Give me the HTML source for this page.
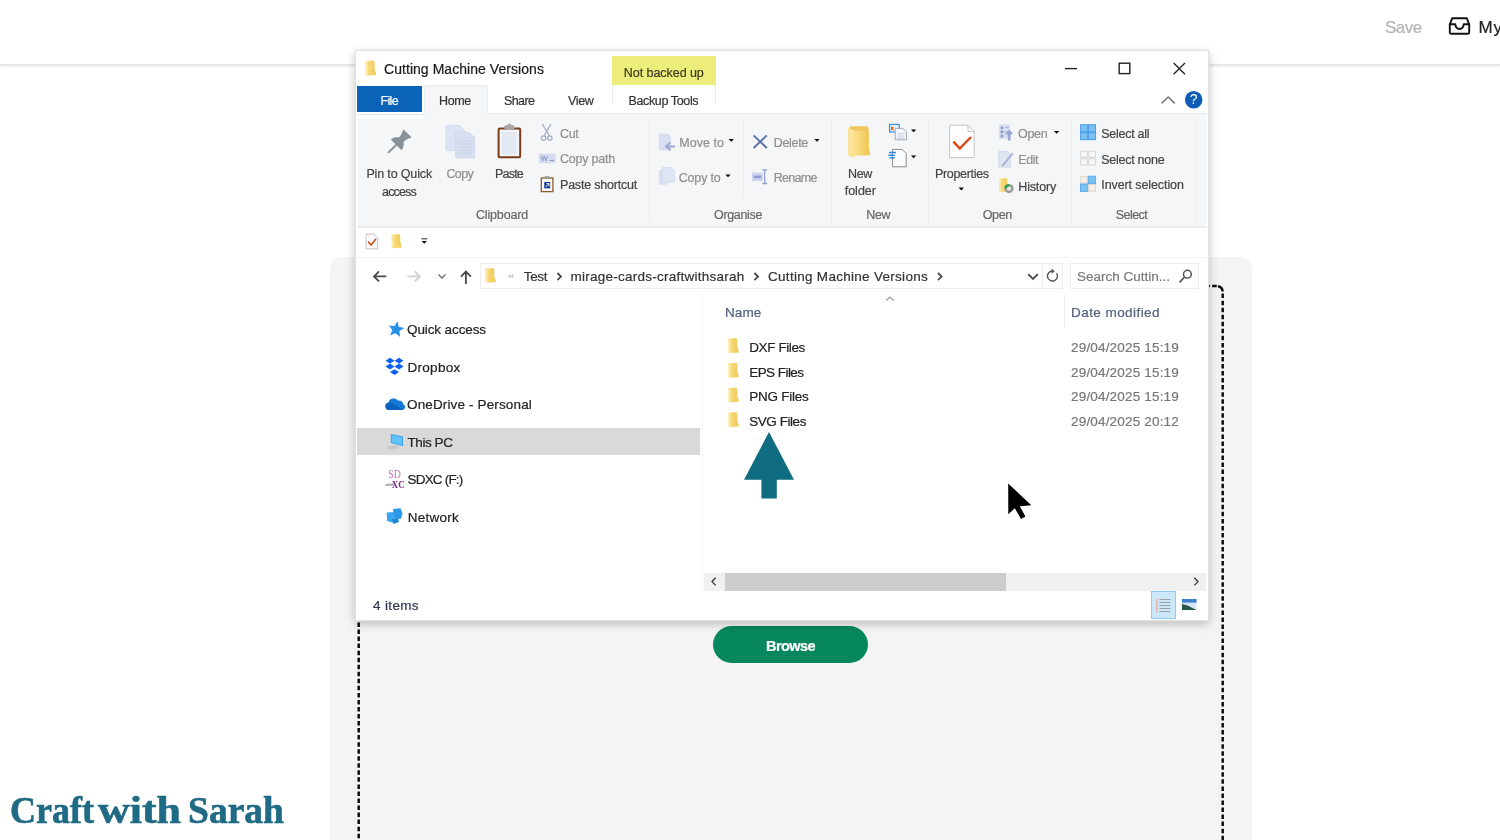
<!DOCTYPE html>
<html lang="en">
<head>
<meta charset="utf-8">
<title>Upload - Cutting Machine Versions</title>
<style>
html,body{margin:0;padding:0;}
body{width:1500px;height:840px;overflow:hidden;background:#fff;position:relative;font-family:"Liberation Sans",sans-serif;}
.t{position:absolute;white-space:pre;-webkit-text-stroke:.2px currentColor;}
.tl{position:absolute;left:0;top:0;will-change:transform;pointer-events:none;}
.abs{position:absolute;}
#hdr{position:absolute;left:0;top:0;width:1500px;height:64px;background:#fff;border-bottom:2px solid #e7e7e7;box-shadow:0 1px 2px rgba(0,0,0,.05);}
#panel{position:absolute;left:330px;top:257px;width:921.5px;height:600px;background:#f4f4f4;border-radius:12px 12px 0 0;}
#browse{position:absolute;left:713px;top:626px;width:155px;height:37.4px;border-radius:19px;background:#07875d;}
#logo{font-family:"Liberation Serif",serif;font-weight:bold;color:#1f6a84;-webkit-text-stroke:.5px #1f6a84;}
#win{position:absolute;left:356px;top:51px;width:852px;height:568.5px;background:#fff;box-shadow:0 0 0 1.2px #e2e2e2,0 3px 9px 1px rgba(0,0,0,.24);overflow:hidden;}
#win .abs{position:absolute;}
</style>
</head>
<body>
<!-- page behind the window -->
<div id="hdr"></div>
<svg class="abs" style="left:1440px;top:10px" width="40" height="34" viewBox="1440 10 40 34" fill="none" stroke="#111" stroke-width="1.9" stroke-linejoin="round" stroke-linecap="round">
  <path d="M1452.2 18.2h14.6l2.4 6.3v8a1.2 1.2 0 0 1-1.2 1.2h-17a1.2 1.2 0 0 1-1.2-1.2v-8z"/>
  <path d="M1449.800 24.200h5.400c.5 3.400 2.200 4.800 4.300 4.800s3.800-1.400 4.300-4.800h5.400"/>
</svg>
<div id="panel"></div>
<svg class="abs" style="left:330px;top:257px" width="922" height="583" viewBox="330 257 922 583" fill="none" stroke="#0d0d0d" stroke-width="2.5">
  <path d="M358.700 291.600V850M1222.700 293.600V850" stroke-dasharray="4.500 2.540"/>
  <path d="M364.500 286.100H1210M1212.100 286.100H1216.800M1218 286.300Q1222.300 287 1222.650 291.500M363.400 286.300Q359.100 287 358.750 291.500"/>
</svg>
<div id="browse"></div>
<div class="tl" style="width:1500px;height:840px">
<span class="t" style="left:1385.0px;top:15.8px;font-size:17px;line-height:24px;letter-spacing:-0.54px;color:#b3b3b3;">Save</span>
<span class="t" style="left:1478.6px;top:15.8px;font-size:17px;line-height:24px;letter-spacing:0.86px;color:#222;">My</span>
<span class="t" style="left:766.0px;top:635.9px;font-size:14.5px;line-height:20px;letter-spacing:-0.57px;color:#fff;font-weight:bold;">Browse</span>
</div>
<div id="logo"><span class="t" style="left:10px;top:788.5px;font-size:37px;line-height:44px;transform:scaleX(0.973);transform-origin:0 0;-webkit-text-stroke:.6px #1f6a84;">Craft</span><span class="t" style="left:98px;top:788.5px;font-size:37px;line-height:44px;transform:scaleX(1.187);transform-origin:0 0;-webkit-text-stroke:.6px #1f6a84;">with</span><span class="t" style="left:188px;top:788.5px;font-size:37px;line-height:44px;transform:scaleX(1.015);transform-origin:0 0;-webkit-text-stroke:.6px #1f6a84;">Sarah</span></div>

<!-- explorer window -->
<div id="win">
  <!-- structure -->
  <div class="abs" style="left:255.800px;top:5.200px;width:104px;height:28.400px;background:#eded7b;"></div>
  <div class="abs" style="left:255.800px;top:33.600px;width:104px;height:19px;border-left:1px solid #ececf3;border-right:1px solid #ececf3;box-sizing:border-box;"></div>
  <div class="abs" style="left:2px;top:62px;width:848.5px;height:112px;background:#f5f6f7;border-top:1px solid #e6e7e8;border-bottom:2px solid #ececec;box-sizing:content-box;"></div>
  <div class="abs" style="left:1px;top:61px;width:66px;height:6.5px;background:#fff;"></div>
  <div class="abs" style="left:1px;top:62.5px;width:66px;height:1.2px;background:#d3e6f8;"></div>
  <div class="abs" style="left:1px;top:34.8px;width:65px;height:26.3px;background:#0b63b9;"></div>
  <div class="abs" style="left:67.5px;top:34.3px;width:64.2px;height:29px;background:#f5f6f7;border:1px solid #ebecec;border-bottom:none;box-sizing:border-box;"></div>
  <!-- ribbon separators -->
  <div class="abs" style="left:293px;top:66px;width:1px;height:106px;background:#ecedee;"></div>
  <div class="abs" style="left:386.5px;top:70px;width:1px;height:76px;background:#ecedee;"></div>
  <div class="abs" style="left:475.3px;top:66px;width:1px;height:106px;background:#ecedee;"></div>
  <div class="abs" style="left:572px;top:66px;width:1px;height:106px;background:#ecedee;"></div>
  <div class="abs" style="left:715.3px;top:66px;width:1px;height:106px;background:#ecedee;"></div>
  <div class="abs" style="left:840px;top:66px;width:1px;height:106px;background:#ecedee;"></div>
  <!-- qat bottom line -->
  <div class="abs" style="left:0;top:205.5px;width:852px;height:1px;background:#f3f3f3;"></div>
  <!-- address + search boxes -->
  <div class="abs" style="left:124px;top:212.3px;width:582.5px;height:25.4px;border:1px solid #eeeeee;box-sizing:border-box;"></div>
  <div class="abs" style="left:686px;top:212.3px;width:1px;height:25.4px;background:#eeeeee;"></div>
  <div class="abs" style="left:713.5px;top:212.3px;width:129.5px;height:25.4px;border:1px solid #eeeeee;box-sizing:border-box;"></div>
  <!-- nav selected row -->
  <div class="abs" style="left:1px;top:376.6px;width:342.5px;height:27.6px;background:#d9d9d9;"></div>
  <!-- separators -->
  <div class="abs" style="left:346px;top:243px;width:1px;height:298px;background:#f6f6f6;"></div>
  <div class="abs" style="left:707.5px;top:245.5px;width:1px;height:30px;background:#efefef;"></div>
  <!-- scrollbar -->
  <div class="abs" style="left:348px;top:521.5px;width:502px;height:18.5px;background:#f0f0f0;"></div>
  <div class="abs" style="left:368.6px;top:521.5px;width:281px;height:18.5px;background:#cdcdcd;"></div>
  <!-- status view buttons -->
  <div class="abs" style="left:794.7px;top:540px;width:25.3px;height:28px;background:#cce8f7;border:1px solid #8ccbee;box-sizing:border-box;"></div>

  <!-- icons (drawn in page coordinates) -->
  <svg class="abs" style="left:0;top:0" width="852" height="569" viewBox="356 51 852 569">
    <defs>
      <linearGradient id="fg" x1="0" y1="0" x2="1" y2="0"><stop offset="0" stop-color="#fbe08a"/><stop offset="1" stop-color="#efc755"/></linearGradient>
      <linearGradient id="bl" x1="0" y1="0" x2="1" y2="1"><stop offset="0" stop-color="#2f9df4"/><stop offset="1" stop-color="#1e86e0"/></linearGradient>
      <g id="fold"><path d="M0 .8 8.2 0l.9 1.4V8.3L10.8 14.4.4 15.2z" fill="url(#fg)"/><path d="M0 .8 2.3 2.2 2.6 15 .4 15.2z" fill="#fff3c0" opacity=".55"/></g>
      <path id="dd" d="M0 0h5.2L2.6 2.8z"/>
      <path id="chev" d="M0 0 3.600 3.600 0 7.200" fill="none" stroke="#4a4a4a" stroke-width="1.800"/>
    </defs>
    <!-- title bar -->
    <use href="#fold" x="365.5" y="60.5"/>
    <g stroke="#222" stroke-width="1.400" fill="none">
      <path d="M1065 68.600h12"/>
      <rect x="1119.2" y="63.2" width="10.6" height="10.4"/>
      <path d="M1173.6 63 1185 74.2M1185 63 1173.6 74.2" stroke-width="1.3"/>
    </g>
    <path d="M1161.600 103.400 1168.200 97 1174.800 103.400" fill="none" stroke="#777" stroke-width="1.500"/>
    <circle cx="1193.7" cy="99.7" r="8.8" fill="#0c5cb8"/>
    <text x="1193.7" y="104.3" font-family="Liberation Sans, sans-serif" font-size="14" fill="#fff" text-anchor="middle">?</text>

    <!-- pin -->
    <g transform="translate(407.600 133.400) rotate(45)" fill="#87919a">
      <path d="M-5.600 0H5.600L5 2C3.600 5 3.100 7 3.300 9 5.200 10.500 7.500 12.500 7.500 16.200H-7.500C-7.500 12.500-5.200 10.500-3.300 9-3.100 7-3.600 5-5 2Z"/>
      <rect x="-.95" y="16" width="1.900" height="11.600"/>
    </g>
    <!-- copy -->
    <g fill="#dde3f2" stroke="#ccd4ea" stroke-width=".8">
      <path d="M446.2 125.5h13l5.3 5.3v19.8h-18.3z"/>
      <path d="M455.6 132.2h13.5l5.4 5.4v20.2h-18.9z" fill="#d8dff0"/>
    </g>
    <g stroke="#c5cee6" stroke-width=".8"><path d="M458 141h14M458 144h14M458 147h14M458 150h14M458 153h14"/></g>
    <!-- paste -->
    <rect x="498.6" y="128.4" width="21.6" height="28.8" rx="1" fill="#f1f4f9" stroke="#7a3d18" stroke-width="2"/>
    <rect x="502" y="132" width="14.8" height="22.2" fill="#e3e9f3"/>
    <rect x="504.4" y="125.2" width="10" height="4.6" rx="1" fill="#a7a7a7"/>
    <rect x="507.6" y="123.8" width="3.6" height="2.6" rx="1" fill="#a7a7a7"/>
    <!-- cut -->
    <g fill="none" stroke="#a2adc8" stroke-width="1.3">
      <path d="M542.4 124.2 549.4 136M551 124.2 544 136"/>
      <circle cx="543.6" cy="138" r="2.2"/><circle cx="549.8" cy="138" r="2.2"/>
    </g>
    <!-- copy path -->
    <rect x="538.8" y="153.6" width="17" height="9.6" fill="#d5dcef"/>
    <path d="M541 156l1.6 5 1.6-5 1.6 5 1.6-5M549.5 160.5h4.5" fill="none" stroke="#8f9bc8" stroke-width="1"/>
    <!-- paste shortcut -->
    <rect x="541.3" y="178" width="11.6" height="13.6" fill="#fff" stroke="#8a5a2a" stroke-width="1.3"/>
    <rect x="544.6" y="176.2" width="5" height="2.8" fill="#9a9a9a"/>
    <rect x="544.2" y="182" width="6" height="6.4" fill="#1c3f94"/>
    <path d="M545.6 187l3-3M546.4 183.6h2.6v2.6" stroke="#fff" stroke-width=".9" fill="none"/>
    <!-- move to -->
    <path d="M658.8 133.4h9.2l3 3v14.2h-12.2z" fill="#d8dff0"/>
    <path d="M675 146.4h-8.2M670.4 142.4l-4.2 4 4.2 4" fill="none" stroke="#9ea8d2" stroke-width="2"/>
    <use href="#dd" x="728.7" y="139"/>
    <!-- copy to -->
    <path d="M658.8 170h8.5v14.6h-8.5z" fill="#d8dff0"/>
    <path d="M662.4 167.4h8.4l3.6 3.6v11h-12z" fill="#dfe5f3" stroke="#cdd5ea" stroke-width=".7"/>
    <use href="#dd" x="725.4" y="174.4"/>
    <!-- delete -->
    <path d="M753.6 135.4 766.8 148M766.8 135.4 753.6 148" stroke="#5c74a9" stroke-width="2" fill="none"/>
    <use href="#dd" x="814.4" y="139"/>
    <!-- rename -->
    <rect x="752" y="172.6" width="11" height="8.6" fill="#ccd5ed"/>
    <rect x="753.6" y="175.6" width="7.6" height="2.6" fill="#8fa0d2"/>
    <path d="M762.2 169.8h5M762.2 183.6h5M764.7 169.8v13.8" stroke="#8c9bcb" stroke-width="1.2" fill="none"/>
    <!-- new folder -->
    <path d="M850 126.2h17.4l1.2 2v17.6l1.4 9.4h-20z" fill="#edc65c"/>
    <path d="M848 127.8 854.8 130.8 854.8 158.6 848 155.4z" fill="#fbe59c"/>
    <path d="M854.8 130.8h13.8v24.4h-13.8z" fill="url(#fg)"/>
    <!-- new item -->
    <rect x="889.6" y="124.4" width="9.6" height="7.6" fill="#eaf3fc" stroke="#3a8ee0" stroke-width="1.2"/>
    <rect x="891.2" y="126.6" width="2.2" height="3.6" fill="#c8641e"/>
    <path d="M895.2 128.4h7.6l3.6 3.4v8h-11.2z" fill="#f4f6fa" stroke="#9aa0aa" stroke-width=".9"/>
    <path d="M897.4 133.6h6.8M897.4 136h6.8M897.4 138.2h6.8" stroke="#b7c6e6" stroke-width=".8"/>
    <use href="#dd" x="911" y="129.4"/>
    <!-- easy access -->
    <path d="M892.6 149.4h9.6l4 4v13.4h-13.6z" fill="#fafbfc" stroke="#8d8d8d" stroke-width="1"/>
    <path d="M889 152.6h7M888.4 155.2h6.4M889.6 157.8h5" stroke="#2f8ae2" stroke-width="1.5"/>
    <use href="#dd" x="911" y="155.4"/>
    <!-- properties -->
    <path d="M949.6 125.2h18.4l6.2 6.2v26.2h-24.6z" fill="#fdfdfd" stroke="#c4c4c4" stroke-width="1"/>
    <path d="M968 125.2v6.2h6.2" fill="none" stroke="#c4c4c4" stroke-width="1"/>
    <path d="M953.4 141.6 959.8 148.6 971 137" fill="none" stroke="#d9480f" stroke-width="2.4"/>
    <use href="#dd" x="958.7" y="187.6"/>
    <!-- open -->
    <rect x="999" y="124.2" width="11" height="14.6" fill="#d8dff0"/>
    <path d="M1000.6 126.4h2.6v2.6h-2.6zM1000.6 130.6h2.6v2.6h-2.6zM1000.6 134.8h2.6v2.6h-2.6z" fill="#8f9bc8"/>
    <path d="M1004.8 127.6h4M1004.8 131.8h4" stroke="#aeb8da" stroke-width="1"/>
    <path d="M1009.6 140.6v-6.4h-2.8l4.2-4.6 4.2 4.6h-2.8v6.4z" fill="#9aa6d2" transform="translate(-1.8 0)"/>
    <use href="#dd" x="1054" y="131"/>
    <!-- edit -->
    <path d="M998.6 151.6h9l3 3v12.6h-12z" fill="#dfe5f3" stroke="#ccd4ea" stroke-width=".7"/>
    <path d="M1001.4 165.6 1012 152.6 1013.6 154 1003 166.8z" fill="#aab5da"/>
    <!-- history -->
    <g transform="translate(999 178) scale(.9 .92)"><use href="#fold"/></g>
    <circle cx="1009" cy="188.6" r="4.6" fill="#9a9a9a"/>
    <path d="M1004.4 188.6a4.6 4.6 0 0 1 4.6-4.6v4.6z" fill="#2e9a4e"/>
    <circle cx="1009" cy="188.6" r="2.2" fill="#e8e8e8"/>
    <!-- select all -->
    <rect x="1080.400" y="124.500" width="15.500" height="15.500" fill="#55a3e6"/>
    <g fill="#7dc1f3" stroke="#4b9de2" stroke-width=".9">
      <rect x="1080.7" y="124.8" width="7" height="7"/><rect x="1088.6" y="124.8" width="7" height="7"/>
      <rect x="1080.7" y="132.7" width="7" height="7"/><rect x="1088.6" y="132.7" width="7" height="7"/>
    </g>
    <g fill="#f6f6f6" stroke="#d3d3d3" stroke-width=".9">
      <rect x="1080.7" y="151.2" width="6.6" height="6.2"/><rect x="1088.8" y="151.2" width="6.6" height="6.2"/>
      <rect x="1080.7" y="158.8" width="6.6" height="6.2"/><rect x="1088.8" y="158.8" width="6.6" height="6.2"/>
    </g>
    <g stroke-width=".9">
      <rect x="1080.7" y="176.4" width="6.6" height="6.6" fill="#f7f1ee" stroke="#e3cfc6"/>
      <rect x="1088.2" y="176.2" width="7.4" height="7.4" fill="#7dc1f3" stroke="#5aa8e8"/>
      <rect x="1080.5" y="184" width="7.4" height="7.4" fill="#7dc1f3" stroke="#5aa8e8"/>
      <rect x="1088.8" y="184.6" width="6.6" height="6.6" fill="#f7f1ee" stroke="#e3cfc6"/>
    </g>

    <!-- quick access toolbar -->
    <path d="M366 234h8l3.6 3.6v11.2H366z" fill="#fafafa" stroke="#bdbdbd" stroke-width=".9"/>
    <path d="M368 241.6 371 245 376 238.8" fill="none" stroke="#d9480f" stroke-width="1.5"/>
    <g transform="translate(391.4 234) scale(.97 .94)"><use href="#fold"/></g>
    <path d="M421.4 238.8h5.8" stroke="#222" stroke-width="1"/>
    <use href="#dd" x="421.7" y="241"/>

    <!-- nav arrows -->
    <g fill="none" stroke="#4a4a4a" stroke-width="1.8">
      <path d="M386.4 276.4h-12.4M379 271.4l-5 5 5 5"/>
      <path d="M465.9 284v-12M460.9 276.6l5-5 5 5"/>
      <path d="M438.4 274.4l3.6 3.6 3.6-3.6" stroke="#666" stroke-width="1.3"/>
    </g>
    <path d="M407.4 276.4h12.4M414.8 271.4l5 5-5 5" fill="none" stroke="#cfcfcf" stroke-width="1.8"/>
    <!-- address contents -->
    <g transform="translate(485.2 268) scale(1 .97)"><use href="#fold"/></g>
    <path d="M510.6 274.6l-1.6 1.6 1.6 1.6M513.2 274.6l-1.6 1.6 1.6 1.6" fill="none" stroke="#888" stroke-width=".9"/>
    <use href="#chev" x="557.4" y="273"/>
    <use href="#chev" x="754.4" y="273"/>
    <use href="#chev" x="938" y="273"/>
    <path d="M1028.200 274.200l4.800 4.800 4.800-4.800" fill="none" stroke="#4a4a4a" stroke-width="1.900"/>
    <path d="M1056.6 273.2a5 5 0 1 1-4.4-2.2" fill="none" stroke="#555" stroke-width="1.4"/>
    <path d="M1051.6 268.6l3.2 2.6-3.2 2.6z" fill="#555"/>
    <circle cx="1187.4" cy="274.2" r="3.9" fill="none" stroke="#555" stroke-width="1.5"/>
    <path d="M1184.6 277l-5 5.4" stroke="#555" stroke-width="1.8"/>
    <!-- sort chevron -->
    <path d="M886.200 300.400l3.800-3.400 3.800 3.400" fill="none" stroke="#9a9a9a" stroke-width="1.300"/>

    <!-- nav pane icons -->
    <g transform="translate(395.600 329.400) rotate(7) scale(1.12) translate(-396.300 -329.600)"><path d="M397.2 322.2l1.6 4.8 5 .5-3.9 3.2 1 5-4.3-2.7-4.6 2.3 1.5-4.9-3.6-3.5 5-.2z" fill="url(#bl)"/></g>
    <g fill="#0d5ff5">
      <path d="M390 357.8l4.5 2.9-4.5 2.9-4.5-2.900zM399 357.800l4.500 2.900-4.500 2.900-4.500-2.900zM390 363.600l4.500 2.900-4.500 2.900-4.500-2.900zM399 363.600l4.500 2.900-4.500 2.900-4.500-2.900zM394.500 369.200l4.500 2.900-4.500 2.900-4.500-2.900z"/>
    </g>
    <g transform="translate(385.200 410) scale(.95 .9) translate(-385.200 -410)"><path d="M389.400 410a4.200 4.200 0 0 1-.6-8.300 5.400 5.400 0 0 1 9.800-2.200 4.600 4.600 0 0 1 5.600 4.200 3.300 3.300 0 0 1-.9 6.300z" fill="#1479d6"/>
    <path d="M389.400 410a4.200 4.200 0 0 1-.6-8.300c2.400-.5 4.800.6 6.200 2.500l9.200 5.800z" fill="#0c62c0"/></g>
    <!-- this pc -->
    <path d="M386 446.400l10-1.200 4 2.600-10 1.800z" fill="#c9c9c9"/>
    <path d="M390.800 434l12.200 2.600v9.600l-12.200-3.200z" fill="#3ea4f2"/>
    <path d="M391.800 435.300l10.200 2.200v7.400l-10.200-2.700z" fill="#63c2fa"/>
    <!-- sdxc -->
    <path d="M385.600 484l8-.8v2.600l-8 .2z" fill="#a9b1b8"/>
    <text x="388.200" y="477.900" font-family="Liberation Serif, serif" font-size="11.500" fill="#c870ae" textLength="12.600" lengthAdjust="spacingAndGlyphs">SD</text>
    <text x="391.800" y="487.500" font-family="Liberation Serif, serif" font-size="11" font-weight="bold" fill="#7b1f86" textLength="12.800" lengthAdjust="spacingAndGlyphs">XC</text>
    <!-- network -->
    <g fill="#2b98e6">
      <path d="M393 509l7.500-.8 2 5-1.500 5.500-7 .5z"/>
      <path d="M386.600 512.500l7-.5 1.500 6-3 4.500-5-1.500z" fill="#3aa6f0"/>
      <path d="M391.500 519.500l6.500-1 1 3.500-5.500 2z" fill="#1e86d8"/>
    </g>

    <!-- file list folders -->
    <use href="#fold" x="728.200" y="338"/>
    <use href="#fold" x="728.200" y="362.700"/>
    <use href="#fold" x="728.200" y="387.400"/>
    <use href="#fold" x="728.200" y="412"/>

    <!-- teal arrow -->
    <path d="M769 432l25 47.800h-17.200v18.600h-15.400v-18.600H744z" fill="#106c80"/>
    <!-- mouse cursor -->
    <path d="M1008.200 483.500L1008.300 514.200L1014.800 508.300L1021 518.900L1025.400 516.500L1019.800 506.300L1031.300 505.300Z" fill="#000" stroke="#fff" stroke-width="1.600" stroke-linejoin="round" paint-order="stroke"/>

    <!-- scrollbar arrows -->
    <path d="M715.600 577.800l-3.600 3.800 3.600 3.800" fill="none" stroke="#333" stroke-width="1.300"/>
    <path d="M1194.400 577.800l3.600 3.800-3.600 3.800" fill="none" stroke="#333" stroke-width="1.300"/>
    <!-- status view icons -->
    <g stroke="#8a8f96" stroke-width=".8"><path d="M1159.500 599.500h11M1159.500 602.500h11M1159.500 605.500h11M1159.500 608.500h11M1159.500 611.500h11"/></g>
    <path d="M1156.800 598.500v14" stroke="#e9b9b4" stroke-width="1.600"/>
    <rect x="1182" y="599" width="14.600" height="11" fill="#d8e6f4"/>
    <rect x="1182" y="599" width="14.600" height="3.600" fill="#3f7fd0"/>
    <path d="M1182 604l5.500 1.500 9 4.500h-14.500z" fill="#27584a"/>
  </svg>

<div class="tl" style="width:852px;height:569px">
<span class="t" style="left:28.0px;top:8.0px;font-size:14px;line-height:20px;letter-spacing:0.05px;color:#1a1a1a;">Cutting Machine Versions</span>
<span class="t" style="left:267.8px;top:13.4px;font-size:12.5px;line-height:18px;letter-spacing:-0.05px;color:#3a3a20;">Not backed up</span>
<span class="t" style="left:24.5px;top:40.6px;font-size:12.5px;line-height:18px;letter-spacing:-0.66px;color:#fff;">File</span>
<span class="t" style="left:83.0px;top:40.6px;font-size:12.5px;line-height:18px;letter-spacing:-0.34px;color:#333;">Home</span>
<span class="t" style="left:148.0px;top:40.6px;font-size:12.5px;line-height:18px;letter-spacing:-0.59px;color:#333;">Share</span>
<span class="t" style="left:212.0px;top:40.6px;font-size:12.5px;line-height:18px;letter-spacing:-0.34px;color:#333;">View</span>
<span class="t" style="left:272.6px;top:40.6px;font-size:12.5px;line-height:18px;letter-spacing:-0.38px;color:#333;">Backup Tools</span>
<span class="t" style="left:10.4px;top:113.7px;font-size:12.5px;line-height:18px;letter-spacing:-0.15px;color:#444;">Pin to Quick</span>
<span class="t" style="left:26.0px;top:132.2px;font-size:12.5px;line-height:18px;letter-spacing:-0.82px;color:#444;">access</span>
<span class="t" style="left:90.5px;top:113.7px;font-size:12.5px;line-height:18px;letter-spacing:-0.67px;color:#8e8e8e;">Copy</span>
<span class="t" style="left:139.0px;top:113.7px;font-size:12.5px;line-height:18px;letter-spacing:-0.79px;color:#444;">Paste</span>
<span class="t" style="left:204.0px;top:73.6px;font-size:12.5px;line-height:18px;letter-spacing:-0.32px;color:#8e8e8e;">Cut</span>
<span class="t" style="left:204.0px;top:99.4px;font-size:12.5px;line-height:18px;letter-spacing:-0.22px;color:#8e8e8e;">Copy path</span>
<span class="t" style="left:204.0px;top:125.2px;font-size:12.5px;line-height:18px;letter-spacing:-0.21px;color:#444;">Paste shortcut</span>
<span class="t" style="left:120.0px;top:154.8px;font-size:12.5px;line-height:18px;letter-spacing:-0.17px;color:#666;">Clipboard</span>
<span class="t" style="left:323.3px;top:83.0px;font-size:12.5px;line-height:18px;letter-spacing:0.03px;color:#8e8e8e;">Move to</span>
<span class="t" style="left:322.7px;top:118.0px;font-size:12.5px;line-height:18px;letter-spacing:-0.16px;color:#8e8e8e;">Copy to</span>
<span class="t" style="left:358.0px;top:154.8px;font-size:12.5px;line-height:18px;letter-spacing:-0.34px;color:#666;">Organise</span>
<span class="t" style="left:417.7px;top:83.0px;font-size:12.5px;line-height:18px;letter-spacing:-0.31px;color:#8e8e8e;">Delete</span>
<span class="t" style="left:417.7px;top:118.0px;font-size:12.5px;line-height:18px;letter-spacing:-0.71px;color:#8e8e8e;">Rename</span>
<span class="t" style="left:492.0px;top:113.7px;font-size:12.5px;line-height:18px;letter-spacing:-0.34px;color:#444;">New</span>
<span class="t" style="left:488.7px;top:131.0px;font-size:12.5px;line-height:18px;letter-spacing:0.00px;color:#444;">folder</span>
<span class="t" style="left:510.3px;top:154.8px;font-size:12.5px;line-height:18px;letter-spacing:-0.34px;color:#666;">New</span>
<span class="t" style="left:579.0px;top:113.7px;font-size:12.5px;line-height:18px;letter-spacing:-0.33px;color:#444;">Properties</span>
<span class="t" style="left:662.0px;top:74.0px;font-size:12.5px;line-height:18px;letter-spacing:-0.32px;color:#8e8e8e;">Open</span>
<span class="t" style="left:662.3px;top:100.2px;font-size:12.5px;line-height:18px;letter-spacing:-0.46px;color:#8e8e8e;">Edit</span>
<span class="t" style="left:662.3px;top:126.8px;font-size:12.5px;line-height:18px;letter-spacing:-0.17px;color:#444;">History</span>
<span class="t" style="left:626.7px;top:154.8px;font-size:12.5px;line-height:18px;letter-spacing:-0.32px;color:#666;">Open</span>
<span class="t" style="left:745.3px;top:73.5px;font-size:12.5px;line-height:18px;letter-spacing:-0.27px;color:#444;">Select all</span>
<span class="t" style="left:745.3px;top:99.5px;font-size:12.5px;line-height:18px;letter-spacing:-0.27px;color:#444;">Select none</span>
<span class="t" style="left:745.3px;top:125.2px;font-size:12.5px;line-height:18px;letter-spacing:-0.10px;color:#444;">Invert selection</span>
<span class="t" style="left:759.7px;top:154.8px;font-size:12.5px;line-height:18px;letter-spacing:-0.53px;color:#666;">Select</span>
<span class="t" style="left:167.7px;top:215.9px;font-size:13.5px;line-height:19px;letter-spacing:-0.29px;color:#333;">Test</span>
<span class="t" style="left:214.4px;top:215.9px;font-size:13.5px;line-height:19px;letter-spacing:0.25px;color:#333;">mirage-cards-craftwithsarah</span>
<span class="t" style="left:412.0px;top:215.9px;font-size:13.5px;line-height:19px;letter-spacing:0.29px;color:#333;">Cutting Machine Versions</span>
<span class="t" style="left:721.0px;top:216.3px;font-size:13.5px;line-height:19px;letter-spacing:-0.00px;color:#7a7a7a;">Search Cuttin...</span>
<span class="t" style="left:369.0px;top:251.7px;font-size:13.5px;line-height:19px;letter-spacing:0.12px;color:#4f5f7c;">Name</span>
<span class="t" style="left:715.0px;top:251.7px;font-size:13.5px;line-height:19px;letter-spacing:0.44px;color:#4f5f7c;">Date modified</span>
<span class="t" style="left:51.0px;top:268.9px;font-size:13.5px;line-height:19px;letter-spacing:-0.11px;color:#222;">Quick access</span>
<span class="t" style="left:51.5px;top:306.5px;font-size:13.5px;line-height:19px;letter-spacing:0.28px;color:#222;">Dropbox</span>
<span class="t" style="left:51.0px;top:344.3px;font-size:13.5px;line-height:19px;letter-spacing:0.14px;color:#222;">OneDrive - Personal</span>
<span class="t" style="left:51.5px;top:382.1px;font-size:13.5px;line-height:19px;letter-spacing:-0.43px;color:#222;">This PC</span>
<span class="t" style="left:51.5px;top:419.4px;font-size:13.5px;line-height:19px;letter-spacing:-0.81px;color:#222;">SDXC (F:)</span>
<span class="t" style="left:51.8px;top:457.3px;font-size:13.5px;line-height:19px;letter-spacing:0.24px;color:#222;">Network</span>
<span class="t" style="left:393.2px;top:286.8px;font-size:13.5px;line-height:19px;letter-spacing:-0.39px;color:#222;">DXF Files</span>
<span class="t" style="left:715.0px;top:286.8px;font-size:13.5px;line-height:19px;letter-spacing:0.18px;color:#777;">29/04/2025 15:19</span>
<span class="t" style="left:393.2px;top:311.5px;font-size:13.5px;line-height:19px;letter-spacing:-0.55px;color:#222;">EPS Files</span>
<span class="t" style="left:715.0px;top:311.5px;font-size:13.5px;line-height:19px;letter-spacing:0.18px;color:#777;">29/04/2025 15:19</span>
<span class="t" style="left:393.2px;top:336.2px;font-size:13.5px;line-height:19px;letter-spacing:-0.25px;color:#222;">PNG Files</span>
<span class="t" style="left:715.0px;top:336.2px;font-size:13.5px;line-height:19px;letter-spacing:0.18px;color:#777;">29/04/2025 15:19</span>
<span class="t" style="left:393.2px;top:360.7px;font-size:13.5px;line-height:19px;letter-spacing:-0.44px;color:#222;">SVG Files</span>
<span class="t" style="left:715.0px;top:360.7px;font-size:13.5px;line-height:19px;letter-spacing:0.18px;color:#777;">29/04/2025 20:12</span>
<span class="t" style="left:17.0px;top:545.3px;font-size:13.5px;line-height:19px;letter-spacing:0.35px;color:#2c3550;">4 items</span>
</div>
</div>
</body>
</html>
